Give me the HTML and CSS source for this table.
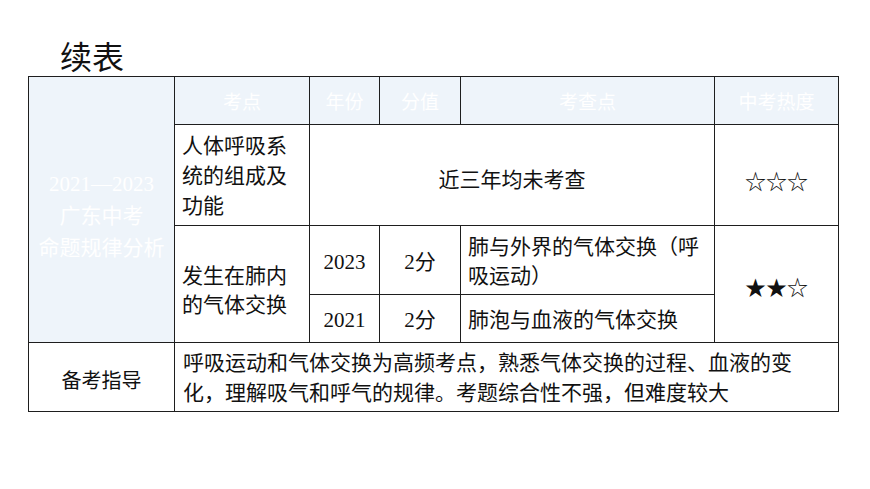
FILE: index.html
```html
<!DOCTYPE html>
<html lang="zh">
<head>
<meta charset="utf-8">
<title>续表</title>
<link rel="stylesheet" href="styles.css">
</head>
<body>
<div class="title">续表</div>
<table class="grid">
  <colgroup>
    <col class="c1"><col class="c2"><col class="c3"><col class="c4"><col class="c5"><col class="c6">
  </colgroup>
  <tr class="r-head">
    <td class="side" rowspan="4"><div class="side-text">2021—2023<br>广东中考<br>命题规律分析</div></td>
    <td class="head">考点</td>
    <td class="head">年份</td>
    <td class="head">分值</td>
    <td class="head">考查点</td>
    <td class="head">中考热度</td>
  </tr>
  <tr class="r-one">
    <td class="left">人体呼吸系统的组成及功能</td>
    <td class="center shift" colspan="3">近三年均未考查</td>
    <td class="center stars shift">☆☆☆</td>
  </tr>
  <tr class="r-two">
    <td class="left low" rowspan="2">发生在肺内的气体交换</td>
    <td class="center num">2023</td>
    <td class="center num">2分</td>
    <td class="left">肺与外界的气体交换（呼吸运动）</td>
    <td class="center stars" rowspan="2">★★☆</td>
  </tr>
  <tr class="r-three">
    <td class="center num thin-top">2021</td>
    <td class="center num thin-top">2分</td>
    <td class="left thin-top">肺泡与血液的气体交换</td>
  </tr>
  <tr class="r-guide">
    <td class="center">备考指导</td>
    <td class="left" colspan="5">呼吸运动和气体交换为高频考点，熟悉气体交换的过程、血液的变<br>化，理解吸气和呼气的规律。考题综合性不强，但难度较大</td>
  </tr>
</table>
</body>
</html>
```

FILE: styles.css
```css
html, body {
  margin: 0;
  padding: 0;
  background: #ffffff;
}
body {
  width: 870px;
  height: 489px;
  overflow: hidden;
  font-family: "Liberation Serif", "Noto Sans CJK SC", serif;
  color: #111;
}
.title {
  box-sizing: border-box;
  height: 76px;
  padding: 37px 0 0 60px;
  font-family: "Noto Sans CJK SC", sans-serif;
  font-size: 32px;
  line-height: 36px;
  color: #111;
}
.grid {
  margin-left: 28px;
  border-collapse: collapse;
  table-layout: fixed;
  width: 810px;
}
.c1 { width: 146px; }
.c2 { width: 135px; }
.c3 { width: 70px; }
.c4 { width: 81px; }
.c5 { width: 254px; }
.c6 { width: 124px; }
.grid td {
  border: 1px solid #1e1e1e;
  padding: 4px 7px 0;
  font-size: 21px;
  line-height: 29px;
  vertical-align: middle;
}
.r-head { height: 48px; }
.r-one { height: 101px; }
.r-two { height: 69px; }
.r-three { height: 48px; }
.r-guide { height: 69px; }
.side, .head {
  background: #eef4fa;
  color: #ffffff;
  text-align: center;
}
.grid td.head {
  padding-top: 0;
  font-size: 19px;
  font-family: "Noto Sans CJK SC", sans-serif;
}
.grid td.side { padding-top: 0; }
.side-text {
  padding-top: 12px;
  line-height: 32px;
  font-size: 21px;
}
.left { text-align: left; }
.grid .r-one .left { line-height: 30px; padding-top: 2px; }
.center { text-align: center; }
.grid td.shift { padding-top: 10px; }
.grid td.low { padding-top: 14px; }
.num { font-size: 21px; }
.stars {
  font-family: "Noto Sans CJK SC", sans-serif;
  font-size: 20px;
  letter-spacing: 0;
}
.thin-top { border-top-color: #666; }
.grid .r-guide .left { padding-left: 8px; padding-top: 2px; line-height: 30px; }
.r-guide .center { font-family: "Noto Sans CJK SC", sans-serif; font-size: 20px; }
```
